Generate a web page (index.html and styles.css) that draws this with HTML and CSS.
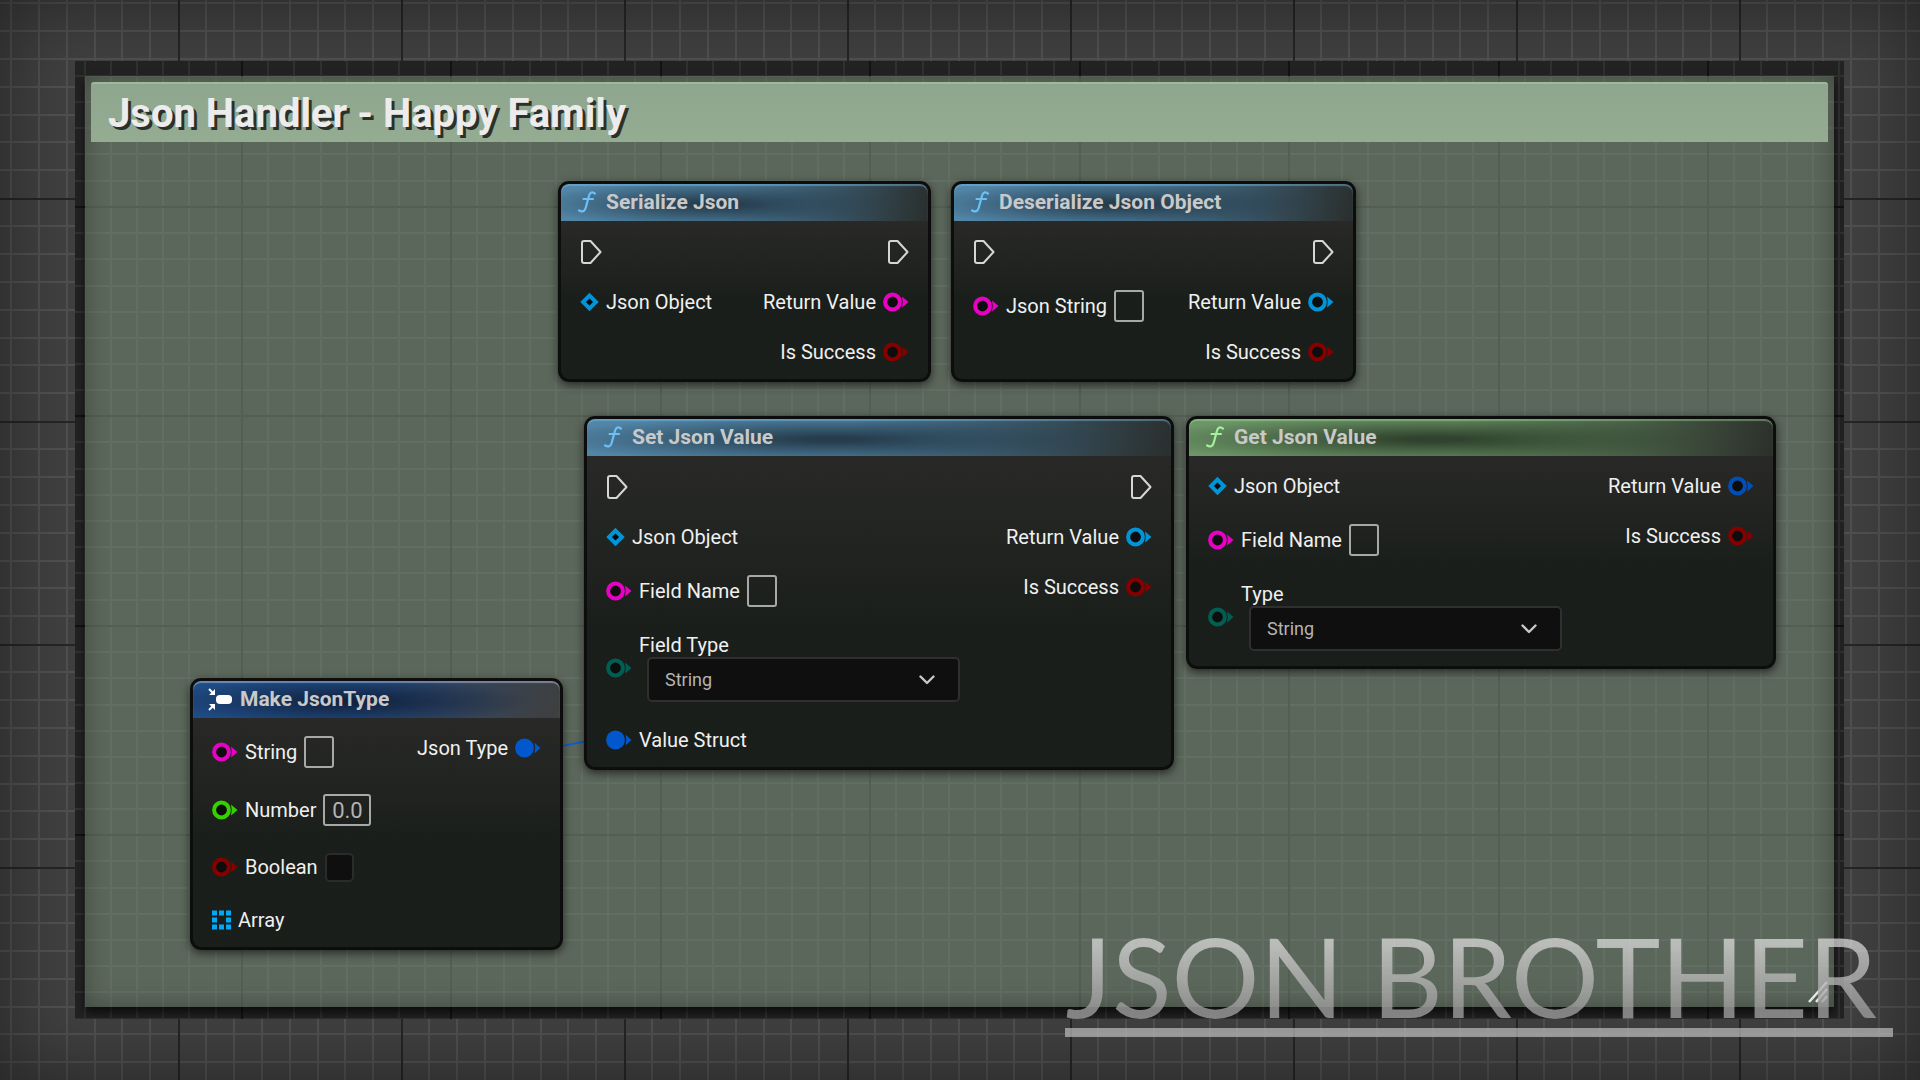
FILE: index.html
```html
<!DOCTYPE html>
<html lang="en">
<head>
<meta charset="utf-8">
<title>Json Handler - Happy Family</title>
<link rel="stylesheet" href="styles.css">
</head>
<body>
<svg class="defs" width="0" height="0" aria-hidden="true">
  <defs>
    <pattern id="grid-outer" x="178" y="198" width="223" height="223" patternUnits="userSpaceOnUse">
      <path class="outer-minor" d="M28 0V223M56 0V223M84 0V223M112 0V223M140 0V223M167 0V223M195 0V223M0 28H223M0 56H223M0 84H223M0 112H223M0 140H223M0 167H223M0 195H223"/>
      <path class="outer-major" d="M1 0V223M0 1H223"/>
    </pattern>
    <pattern id="grid-inner" x="166" y="145" width="419" height="419" patternUnits="userSpaceOnUse">
      <path class="inner-minor" d="M27 0V419M53 0V419M80 0V419M106 0V419M132 0V419M158 0V419M184 0V419M236 0V419M263 0V419M289 0V419M315 0V419M341 0V419M367 0V419M394 0V419M0 27H419M0 53H419M0 80H419M0 106H419M0 132H419M0 158H419M0 184H419M0 236H419M0 263H419M0 289H419M0 315H419M0 341H419M0 367H419M0 394H419"/>
      <path class="inner-major" d="M1 0V419M210 0V419M0 1H419M0 210H419"/>
    </pattern>
    <symbol id="exec" viewBox="0 0 22 26">
      <path d="M4 2H10.500L20.500 13L10.500 24H4Q2 24 2 22V4Q2 2 4 2Z" fill="none" stroke="#d6d6d6" stroke-width="2" stroke-linejoin="round"/>
    </symbol>
    <symbol id="pin" viewBox="0 0 26 20">
      <circle cx="9.500" cy="10" r="7.400" fill="#0d0d0d" stroke="currentColor" stroke-width="4"/>
      <path d="M19 4.500Q21 6 25.500 10Q21 14 19 15.500Q20.500 10 19 4.500Z" fill="currentColor"/>
    </symbol>
    <symbol id="pin-full" viewBox="0 0 26 20">
      <circle cx="9.500" cy="10" r="9.400" fill="currentColor"/>
      <path d="M19.500 4.500Q21 6 25.500 10Q21 14 19.500 15.500Q21 10 19.500 4.500Z" fill="currentColor"/>
    </symbol>
    <symbol id="diamond" viewBox="0 0 19 20">
      <path d="M9.500 3.600L15.900 10L9.500 16.400L3.100 10Z" fill="#060a0c" stroke="currentColor" stroke-width="4"/>
    </symbol>
    <symbol id="array" viewBox="0 0 19 19">
      <path d="M0 0h5v5h-5zM7 0h5v5h-5zM14 0h5v5h-5zM0 7h5v5h-5zM14 7h5v5h-5zM0 14h5v5h-5zM7 14h5v5h-5zM14 14h5v5h-5z" fill="currentColor"/>
    </symbol>
    <symbol id="func" viewBox="0 0 18 22">
      <path d="M17 2.600C14.500 .4 11.800 1.200 10.900 5L7.800 16.500C6.800 20.400 4 21.400 1 19.400M5.500 8H15" fill="none" stroke="currentColor" stroke-width="2.200" stroke-linecap="round"/>
    </symbol>
    <symbol id="make" viewBox="0 0 24 24">
      <rect x="8" y="8" width="16" height="9" rx="4" fill="#fff"/>
      <path d="M1 2L5 6M1 23L5 19" stroke="#fff" stroke-width="2"/>
      <path d="M7 2V8H1ZM7 23V17H1Z" fill="#fff"/>
    </symbol>
    <symbol id="chevron" viewBox="0 0 16 10">
      <path d="M1.500 1.500L8 8L14.500 1.500" fill="none" stroke="#c8c8c8" stroke-width="2.400" stroke-linecap="round" stroke-linejoin="round"/>
    </symbol>
  </defs>
</svg>

<svg class="backdrop" aria-hidden="true"><rect width="100%" height="100%" fill="url(#grid-outer)"/></svg>
<div class="vignette"></div>

<main class="frame">
  <svg class="frame-grid" aria-hidden="true"><rect width="100%" height="100%" fill="url(#grid-inner)"/></svg>
  <section class="comment">
    <h1 class="comment-title">Json Handler - Happy Family</h1>

    <svg class="wire" width="70" height="20" aria-hidden="true"><path d="M4 13C26 13 42 5 66 5" fill="none" stroke="#0a5fd6" stroke-width="2"/></svg>

    <article class="node node-serialize">
      <h2 class="node-title blue"><svg class="func"><use href="#func"/></svg>Serialize Json</h2>
      <div class="pins">
        <ul class="inputs">
          <li class="row exec-row"><svg class="exec"><use href="#exec"/></svg></li>
          <li class="row"><svg class="small-pin object"><use href="#diamond"/></svg>Json Object</li>
        </ul>
        <ul class="outputs">
          <li class="row exec-row"><svg class="exec"><use href="#exec"/></svg></li>
          <li class="row">Return Value<svg class="pin string"><use href="#pin"/></svg></li>
          <li class="row">Is Success<svg class="pin bool"><use href="#pin"/></svg></li>
        </ul>
      </div>
    </article>

    <article class="node node-deserialize">
      <h2 class="node-title blue"><svg class="func"><use href="#func"/></svg>Deserialize Json Object</h2>
      <div class="pins">
        <ul class="inputs">
          <li class="row exec-row"><svg class="exec"><use href="#exec"/></svg></li>
          <li class="row field-row"><svg class="pin string"><use href="#pin"/></svg><label for="json-string">Json String</label><input class="text-box" id="json-string" type="text"></li>
        </ul>
        <ul class="outputs">
          <li class="row exec-row"><svg class="exec"><use href="#exec"/></svg></li>
          <li class="row">Return Value<svg class="pin object"><use href="#pin"/></svg></li>
          <li class="row">Is Success<svg class="pin bool"><use href="#pin"/></svg></li>
        </ul>
      </div>
    </article>

    <article class="node node-set">
      <h2 class="node-title blue"><svg class="func"><use href="#func"/></svg>Set Json Value</h2>
      <div class="pins">
        <ul class="inputs">
          <li class="row exec-row"><svg class="exec"><use href="#exec"/></svg></li>
          <li class="row"><svg class="small-pin object"><use href="#diamond"/></svg>Json Object</li>
          <li class="row field-row"><svg class="pin string"><use href="#pin"/></svg><label for="set-name">Field Name</label><input class="text-box" id="set-name" type="text"></li>
          <li class="row enum-row"><svg class="pin enum"><use href="#pin"/></svg>
            <div class="enum-field">
              <label for="set-type">Field Type</label>
              <div class="combo"><select id="set-type"><option>String</option><option>Number</option><option>Boolean</option><option>Array</option></select><svg class="chevron"><use href="#chevron"/></svg></div>
            </div>
          </li>
          <li class="row"><svg class="pin struct"><use href="#pin-full"/></svg>Value Struct</li>
        </ul>
        <ul class="outputs">
          <li class="row exec-row"><svg class="exec"><use href="#exec"/></svg></li>
          <li class="row">Return Value<svg class="pin object"><use href="#pin"/></svg></li>
          <li class="row">Is Success<svg class="pin bool"><use href="#pin"/></svg></li>
        </ul>
      </div>
    </article>

    <article class="node node-get">
      <h2 class="node-title green"><svg class="func"><use href="#func"/></svg>Get Json Value</h2>
      <div class="pins">
        <ul class="inputs">
          <li class="row"><svg class="small-pin object"><use href="#diamond"/></svg>Json Object</li>
          <li class="row field-row"><svg class="pin string"><use href="#pin"/></svg><label for="get-name">Field Name</label><input class="text-box" id="get-name" type="text"></li>
          <li class="row enum-row"><svg class="pin enum"><use href="#pin"/></svg>
            <div class="enum-field">
              <label for="get-type">Type</label>
              <div class="combo"><select id="get-type"><option>String</option><option>Number</option><option>Boolean</option><option>Array</option></select><svg class="chevron"><use href="#chevron"/></svg></div>
            </div>
          </li>
        </ul>
        <ul class="outputs">
          <li class="row">Return Value<svg class="pin struct-open"><use href="#pin"/></svg></li>
          <li class="row">Is Success<svg class="pin bool"><use href="#pin"/></svg></li>
        </ul>
      </div>
    </article>

    <article class="node node-make">
      <h2 class="node-title navy"><svg class="make"><use href="#make"/></svg>Make JsonType</h2>
      <div class="pins">
        <ul class="inputs">
          <li class="row field-row"><svg class="pin string"><use href="#pin"/></svg><label for="make-string">String</label><input class="text-box" id="make-string" type="text"></li>
          <li class="row field-row"><svg class="pin float"><use href="#pin"/></svg><label for="make-number">Number</label><input class="text-box number-box" id="make-number" type="text" value="0.0"></li>
          <li class="row check-row"><svg class="pin bool"><use href="#pin"/></svg><label for="make-bool">Boolean</label><input class="check-box" id="make-bool" type="checkbox"></li>
          <li class="row"><svg class="small-pin array"><use href="#array"/></svg>Array</li>
        </ul>
        <ul class="outputs">
          <li class="row">Json Type<svg class="pin struct"><use href="#pin-full"/></svg></li>
        </ul>
      </div>
    </article>

    <svg class="grip" viewBox="0 0 20 22" aria-hidden="true"><path d="M1 21L19 1M8 21L19 8M14 21L19 15" fill="none" stroke="#e8e8e8" stroke-width="2.500"/></svg>
  </section>
</main>

<p class="watermark">JSON BROTHER</p>
</body>
</html>
```

FILE: styles.css
```css
* {
  box-sizing: border-box;
}

body {
  position: relative;
  display: flex;
  min-width: 1900px;
  min-height: 100vh;
  margin: 0;
  padding: 61px 76px 61px 75px;
  overflow: hidden;
  background: #404040;
  color: #f0f0f0;
  font: 20px/32px Roboto, "Liberation Sans", sans-serif;
}

.defs {
  position: absolute;
}

/* Graph background */
.backdrop,
.frame-grid,
.vignette {
  position: absolute;
  top: 0;
  left: 0;
  width: 100%;
  height: 100%;
}

.outer-minor {
  fill: none;
  stroke: #505050;
  stroke-width: 2;
}

.outer-major {
  fill: none;
  stroke: #252525;
  stroke-width: 2;
}

.inner-minor {
  fill: none;
  stroke: #303030;
  stroke-width: 2;
}

.inner-major {
  fill: none;
  stroke: #121212;
  stroke-width: 2;
}

.vignette {
  box-shadow: inset 0 0 80px rgba(0, 0, 0, .45);
}

/* Comment box */
.frame {
  position: relative;
  display: flex;
  flex: 1;
  padding: 15px 10px 12px;
  overflow: hidden;
  background: #222;
}

.comment {
  position: relative;
  flex: 1;
  padding: 6px;
  background: rgba(150, 172, 148, .5);
  box-shadow: inset 0 0 24px rgba(0, 0, 0, .3), 0 6px 8px rgba(0, 0, 0, .6);
}

.comment-title {
  margin: 0;
  padding: 1px 17px 0;
  border-top: 2px solid #9dbb9a;
  border-radius: 3px 3px 0 0;
  background: linear-gradient(#8fa68e, #94ac92);
  color: #ececec;
  font-size: 40px;
  font-weight: 700;
  line-height: 57px;
  text-shadow: 3px 3px 0 #2a302a;
}

/* Nodes on the graph canvas */
.node {
  position: absolute;
  border: 3px solid #0c0d0c;
  border-radius: 11px;
  background: linear-gradient(rgba(38, 38, 37, .95) 37px, rgba(24, 28, 24, .97) 60%);
  box-shadow: 0 3px 10px rgba(0, 0, 0, .6);
}

.node-serialize {
  top: 105px;
  left: 473px;
  width: 373px;
}

.node-deserialize {
  top: 105px;
  left: 866px;
  width: 405px;
}

.node-set {
  top: 340px;
  left: 499px;
  width: 590px;
}

.node-get {
  top: 340px;
  left: 1101px;
  width: 590px;
}

.node-make {
  top: 602px;
  left: 105px;
  width: 373px;
}

.node-title {
  display: flex;
  align-items: center;
  gap: 10px;
  height: 37px;
  margin: 0;
  padding: 0 17px 2px;
  border-radius: 8px 8px 0 0;
  color: #c9c9c9;
  font-size: 21px;
  font-weight: 700;
  line-height: 32px;
}

.blue {
  background:
    radial-gradient(ellipse 50% 65% at 42% 55%, #263d4d 10%, rgba(38, 61, 77, 0)),
    linear-gradient(100deg, #5286a8 45%, rgba(64, 102, 124, .7) 75%, rgba(45, 55, 55, .4));
  box-shadow: inset 0 2px 1px rgba(120, 190, 235, .45);
}

.green {
  background:
    radial-gradient(ellipse 50% 65% at 42% 55%, #30432e 10%, rgba(48, 67, 46, 0)),
    linear-gradient(100deg, #6c9667 45%, rgba(88, 120, 85, .7) 75%, rgba(50, 58, 50, .4));
  box-shadow: inset 0 2px 1px rgba(160, 220, 150, .45);
}

.navy {
  background:
    radial-gradient(ellipse 50% 65% at 42% 55%, #13233f 10%, rgba(19, 35, 63, 0)),
    linear-gradient(100deg, #1f4c86 45%, rgba(60, 80, 110, .7) 75%, rgba(85, 85, 85, .5));
  box-shadow: inset 0 2px 1px rgba(180, 200, 230, .5);
}

.func {
  width: 18px;
  height: 22px;
  color: #6cc0f5;
}

.green .func {
  color: #a5f09c;
}

.make {
  width: 24px;
  height: 24px;
  margin: 0 -2px;
}

.pins {
  display: flex;
  justify-content: space-between;
  padding: 14px 19px 11px 19px;
}

.inputs,
.outputs {
  display: flex;
  flex-direction: column;
  gap: 18px;
  margin: 0;
  padding: 0;
  list-style: none;
}

.outputs {
  align-items: flex-end;
}

.row {
  display: flex;
  align-items: center;
  gap: 7px;
  height: 32px;
  white-space: nowrap;
}

.exec-row {
  height: 33px;
}

.field-row {
  height: 40px;
}

.check-row {
  height: 38px;
}

.enum-row {
  height: 77px;
}

.exec {
  width: 22px;
  height: 26px;
}

.pin {
  width: 26px;
  height: 20px;
}

.small-pin {
  width: 19px;
  height: 20px;
}

.string {
  color: #e800c4;
}

.bool {
  color: #860000;
}

.object {
  color: #0095d9;
}

.float {
  color: #36d000;
}

.enum {
  color: #005f52;
}

.struct {
  color: #0058cc;
}

.struct-open {
  color: #004fb8;
}

.array {
  color: #00a8f8;
}

/* Controls */
.text-box {
  width: 30px;
  height: 32px;
  padding: 0;
  border: 2px solid #a8a8a8;
  border-radius: 3px;
  background: transparent;
  color: #b4b4b4;
  font: 22px/28px Roboto, "Liberation Sans", sans-serif;
  text-align: center;
}

.number-box {
  width: 48px;
}

.check-box {
  width: 29px;
  height: 29px;
  margin: 0;
  border: 2px solid #2b2b2b;
  border-radius: 5px;
  background: #0f0f0f;
  appearance: none;
}

.enum-field {
  display: flex;
  flex-direction: column;
  line-height: 24px;
}

.combo {
  display: grid;
  align-items: center;
  margin-left: 8px;
}

.combo select {
  grid-area: 1 / 1;
  width: 313px;
  height: 45px;
  padding: 0 16px;
  border: 2px solid #2f2f2f;
  border-radius: 5px;
  background: #0f0f0f;
  color: #b4b4b4;
  font: 18px/24px Roboto, "Liberation Sans", sans-serif;
  appearance: none;
}

.chevron {
  grid-area: 1 / 1;
  justify-self: end;
  width: 16px;
  height: 10px;
  margin-right: 25px;
  pointer-events: none;
}

.wire {
  position: absolute;
  top: 659px;
  left: 453px;
}

.grip {
  position: absolute;
  right: 6px;
  bottom: 4px;
  width: 20px;
  height: 22px;
}

/* Watermark over the canvas */
.watermark {
  position: absolute;
  right: 27px;
  bottom: 43px;
  margin: 0;
  padding: 0 16px 0 0;
  border-bottom: 9px solid rgba(190, 190, 190, .7);
  background: linear-gradient(rgba(225, 225, 225, .7) 20%, rgba(150, 150, 150, .85) 85%);
  background-clip: text;
  color: transparent;
  font: 400 110px/105px Lato, "Noto Sans", sans-serif;
  white-space: nowrap;
}
```
